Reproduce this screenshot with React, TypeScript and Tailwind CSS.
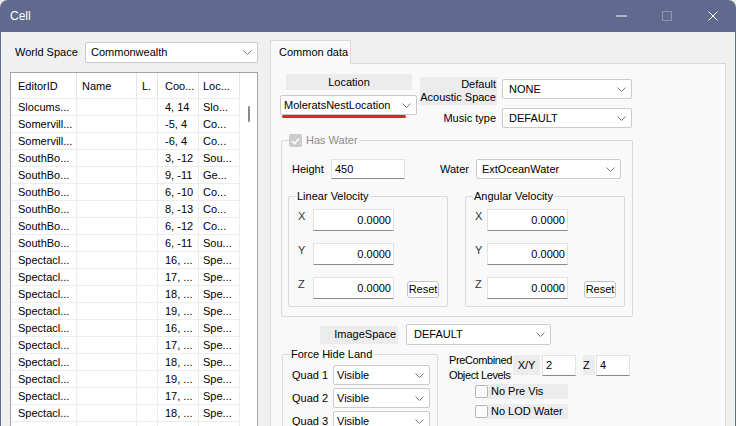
import React from "react";
import clsx from "clsx";

const rows: [string, string, string][] = [
  ["Slocums...", "4, 14", "Slo..."],
  ["Somervill...", "-5, 4", "Co..."],
  ["Somervill...", "-6, 4", "Co..."],
  ["SouthBo...", "3, -12", "Sou..."],
  ["SouthBo...", "9, -11", "Ge..."],
  ["SouthBo...", "6, -10", "Co..."],
  ["SouthBo...", "8, -13", "Co..."],
  ["SouthBo...", "6, -12", "Co..."],
  ["SouthBo...", "6, -11", "Sou..."],
  ["Spectacl...", "16, ...", "Spe..."],
  ["Spectacl...", "17, ...", "Spe..."],
  ["Spectacl...", "18, ...", "Spe..."],
  ["Spectacl...", "19, ...", "Spe..."],
  ["Spectacl...", "16, ...", "Spe..."],
  ["Spectacl...", "17, ...", "Spe..."],
  ["Spectacl...", "18, ...", "Spe..."],
  ["Spectacl...", "19, ...", "Spe..."],
  ["Spectacl...", "17, ...", "Spe..."],
  ["Spectacl...", "18, ...", "Spe..."],
];

// column widths + text inset of the list view
const cols = [
  { w: "w-[66px]", pl: "pl-[7px]", head: "EditorID" },
  { w: "w-[60px]", pl: "pl-[5px]", head: "Name" },
  { w: "w-[21px]", pl: "pl-[5px]", head: "L." },
  { w: "w-[41px]", pl: "pl-[7px]", head: "Coo..." },
  { w: "w-[41px]", pl: "pl-[4px]", head: "Loc..." },
];

function Chevron() {
  return (
    <svg width="9" height="5" viewBox="0 0 9 5" className="shrink-0">
      <path d="M0.5 0.5 L4.5 4.5 L8.5 0.5" fill="none" stroke="#777" strokeWidth="1" />
    </svg>
  );
}

function Combo({ text, className, pad = "pl-[5px]" }: { text: string; className?: string; pad?: string }) {
  return (
    <div
      className={clsx(
        "flex shrink-0 items-center justify-between rounded-[2px] border border-[#cacaca] bg-white pr-[5px]",
        pad,
        className,
      )}
    >
      <span className="whitespace-nowrap">{text}</span>
      <Chevron />
    </div>
  );
}

function Edit({ value, className, right }: { value: string; className?: string; right?: boolean }) {
  return (
    <div
      className={clsx(
        "flex shrink-0 items-center rounded-[1px] border border-[#e2e2e2] border-b-[#8a8a8a] bg-white",
        right ? "justify-end pr-[2px]" : "pl-[3px]",
        className,
      )}
    >
      {value}
    </div>
  );
}

function CheckBox({ checked, disabled }: { checked?: boolean; disabled?: boolean }) {
  return (
    <div
      className={clsx(
        "flex h-[13px] w-[13px] shrink-0 items-center justify-center rounded-[2px] border",
        disabled ? "border-[#cccccc] bg-[#cccccc]" : "border-[#b5b5b5] bg-[#fbfbfb]",
      )}
    >
      {checked && (
        <svg width="9" height="8" viewBox="0 0 9 8">
          <path d="M1 4 L3.5 6.5 L8 1.5" fill="none" stroke="#ffffff" strokeWidth="1.6" />
        </svg>
      )}
    </div>
  );
}

function VelocityGroup({ title, labelW, resetMl, className }: { title: string; labelW: string; resetMl: string; className?: string }) {
  return (
    <fieldset className={clsx("w-[160px] shrink-0 rounded-[2px] border border-[#dadada]", className)}>
      <legend className="ml-[7px] px-[1px] leading-[13px]">{title}</legend>
      <div className="flex flex-col gap-[12px] pb-[7px] pl-[9px] pt-[6px]">
        {["X", "Y", "Z"].map((axis) => (
          <div key={axis} className="flex items-start">
            <span className={clsx("pt-[1px] leading-[13px] text-[#333]", labelW)}>{axis}</span>
            <Edit value="0.0000" right className="h-[22px] w-[81px]" />
            {axis === "Z" && (
              <button
                className={clsx(
                  "mt-[4px] flex h-[17px] w-[32px] items-center justify-center rounded-[3px] border border-[#c4c4c4] bg-white",
                  resetMl,
                )}
              >
                Reset
              </button>
            )}
          </div>
        ))}
      </div>
    </fieldset>
  );
}

function TitleBar() {
  return (
    <div className="flex h-[32px] shrink-0 items-center text-white">
      <span className="pl-[10px] text-[12px]">Cell</span>
      <div className="ml-auto flex h-full">
        <div className="flex w-[46px] items-center justify-center">
          <svg width="11" height="2" viewBox="0 0 11 2">
            <path d="M0 1 H11" stroke="#ffffff" strokeWidth="1" />
          </svg>
        </div>
        <div className="flex w-[46px] items-center justify-center">
          <svg width="10" height="10" viewBox="0 0 10 10">
            <rect x="0.5" y="0.5" width="9" height="9" fill="none" stroke="#8e97b2" strokeWidth="1" />
          </svg>
        </div>
        <div className="flex w-[46px] items-center justify-center">
          <svg width="10" height="10" viewBox="0 0 10 10">
            <path d="M0.5 0.5 L9.5 9.5 M9.5 0.5 L0.5 9.5" stroke="#ffffff" strokeWidth="1" />
          </svg>
        </div>
      </div>
    </div>
  );
}

function CellList() {
  return (
    <div className="mt-[9px] flex h-[360px] border border-[#a3a3a3] bg-white">
      <div className="flex w-[229px] flex-col">
        <div className="flex h-[25px] shrink-0">
          {cols.map((c) => (
            <div key={c.head} className={clsx("flex items-center border-r border-[#e5e5e5] pt-[2px]", c.w, c.pl)}>
              {c.head}
            </div>
          ))}
        </div>
        {rows.map(([id, coord, loc], i) => (
          <div key={i} className="flex h-[17px] shrink-0 border-t border-[#ededed]">
            {[id, "", "", coord, loc].map((v, j) => (
              <div
                key={j}
                className={clsx("flex items-center whitespace-nowrap border-r border-[#ededed]", cols[j].w, cols[j].pl)}
              >
                {v}
              </div>
            ))}
          </div>
        ))}
        <div className="flex flex-1 border-t border-[#ededed]">
          {cols.map((c) => (
            <div key={c.head} className={clsx("border-r border-[#ededed]", c.w)} />
          ))}
        </div>
      </div>
      <div className="flex w-[17px] justify-center pt-[33px]">
        <div className="h-[16px] w-[2px] rounded-full bg-[#8a8a8a]" />
      </div>
    </div>
  );
}

export default function App() {
  return (
    <div
      className="h-[426px] w-[736px] overflow-hidden bg-[#e9e9e9] text-[11px] text-black"
      style={{ fontFamily: '"Liberation Sans", Arial, sans-serif' }}
    >
      <div className="flex h-full flex-col overflow-hidden rounded-t-[8px] bg-[#5f6a8e]">
        <TitleBar />
        <div className="ml-[1px] mr-[1px] flex flex-1 items-start overflow-hidden bg-[#f0f0f0]">
          {/* Left: world space + cell list */}
          <div className="ml-[9px] w-[248px] shrink-0 pt-[10px]">
            <div className="flex h-[21px] items-center">
              <span className="ml-[5px]">World Space</span>
              <Combo text="Commonwealth" className="ml-auto h-[21px] w-[173px]" pad="pl-[5px]" />
            </div>
            <CellList />
          </div>

          {/* Right: tab page */}
          <div className="ml-[12px] flex w-[456px] shrink-0 flex-col self-stretch pt-[8px]">
            <div className="flex">
              <div className="relative z-10 -mb-[1px] flex h-[24px] w-[81px] items-center border border-b-0 border-[#d9d9d9] bg-[#f9f9f9] pl-[8px]">
                Common data
              </div>
            </div>
            <div className="flex-1 border border-[#d9d9d9] bg-[#f9f9f9]">
              {/* Location / acoustic / music */}
              <div className="flex items-start">
                <div className="ml-[9px] w-[137px] shrink-0 pt-[10px]">
                  <div className="ml-[6px] flex h-[16px] w-[126px] items-center justify-center bg-[#ececec]">Location</div>
                  <Combo text="MoleratsNestLocation" className="mt-[5px] h-[20px] w-[137px]" pad="pl-[3px]" />
                  <div className="ml-[2px] h-[3px] w-[124px] rounded-full bg-[#e0222c]" />
                </div>
                <div className="ml-[3px] pt-[13px]">
                  <div className="flex items-start">
                    <div className="flex h-[28px] w-[77px] flex-col items-end justify-center bg-[#ececec] pr-[1px] leading-[13px]">
                      <span>Default</span>
                      <span>Acoustic Space</span>
                    </div>
                    <Combo text="NONE" className="ml-[5px] mt-[2px] h-[20px] w-[130px]" pad="pl-[6px]" />
                  </div>
                  <div className="mt-[3px] flex items-center">
                    <span className="w-[77px] pr-[1px] text-right">Music type</span>
                    <Combo text="DEFAULT" className="ml-[5px] h-[20px] w-[130px]" pad="pl-[6px]" />
                  </div>
                </div>
              </div>

              {/* Has Water */}
              <fieldset className="ml-[10px] mt-[6px] w-[352px] rounded-[2px] border border-[#dadada]">
                <legend className="ml-[7px] flex items-center gap-[4px] pr-[2px] leading-[13px] text-[#8d8d8d]">
                  <CheckBox checked disabled />
                  <span>Has Water</span>
                </legend>
                <div className="mt-[11px] flex h-[22px] items-center pl-[10px]">
                  <span className="w-[39px]">Height</span>
                  <Edit value="450" className="h-[20px] w-[74px]" />
                  <span className="ml-[35px]">Water</span>
                  <Combo text="ExtOceanWater" className="ml-[7px] h-[20px] w-[145px]" pad="pl-[5px]" />
                </div>
                <div className="mb-[9px] mt-[10px] flex items-start pl-[6px]">
                  <VelocityGroup title="Linear Velocity" labelW="w-[15px]" resetMl="ml-[13px]" />
                  <VelocityGroup title="Angular Velocity" labelW="w-[12px]" resetMl="ml-[16px]" className="ml-[17px]" />
                </div>
              </fieldset>

              {/* ImageSpace */}
              <div className="ml-[49px] mt-[7px] flex items-center">
                <div className="flex h-[18px] w-[78px] items-center justify-end bg-[#ececec] pr-[2px]">ImageSpace</div>
                <Combo text="DEFAULT" className="ml-[8px] h-[21px] w-[145px]" pad="pl-[7px]" />
              </div>

              {/* Force hide land / precombined */}
              <div className="mt-[3px] flex items-start">
                <fieldset className="ml-[11px] w-[156px] shrink-0 rounded-[2px] border border-[#dadada]">
                  <legend className="ml-[7px] px-[1px] leading-[13px]">Force Hide Land</legend>
                  <div className="flex flex-col gap-[3px] pl-[9px] pt-[4px]">
                    {["Quad 1", "Quad 2", "Quad 3"].map((q) => (
                      <div key={q} className="flex items-center">
                        <span className="w-[41px]">{q}</span>
                        <Combo text="Visible" className="h-[20px] w-[97px]" pad="pl-[3px]" />
                      </div>
                    ))}
                  </div>
                </fieldset>
                <div className="ml-[11px] pt-[5px]">
                  <div className="flex items-start">
                    <div className="flex w-[64px] shrink-0 flex-col items-start whitespace-nowrap leading-[15px] tracking-[-0.4px]">
                      <span>PreCombined</span>
                      <span>Object Levels</span>
                    </div>
                    <div className="mt-[2px] flex h-[20px] w-[27px] items-center justify-center bg-[#ececec]">X/Y</div>
                    <Edit value="2" className="ml-[2px] mt-[2px] h-[21px] w-[34px]" />
                    <div className="ml-[7px] mt-[2px] flex h-[20px] w-[12px] items-center bg-[#ececec]">Z</div>
                    <Edit value="4" className="ml-[1px] mt-[2px] h-[21px] w-[34px]" />
                  </div>
                  <div className="ml-[26px] mt-[1px] flex items-center">
                    <CheckBox />
                    <div className="flex h-[15px] w-[80px] items-center bg-[#ececec] pl-[3px]">No Pre Vis</div>
                  </div>
                  <div className="ml-[26px] mt-[5px] flex items-center">
                    <CheckBox />
                    <div className="flex h-[15px] w-[80px] items-center bg-[#ececec] pl-[3px]">No LOD Water</div>
                  </div>
                </div>
              </div>
            </div>
          </div>
        </div>
      </div>
    </div>
  );
}
